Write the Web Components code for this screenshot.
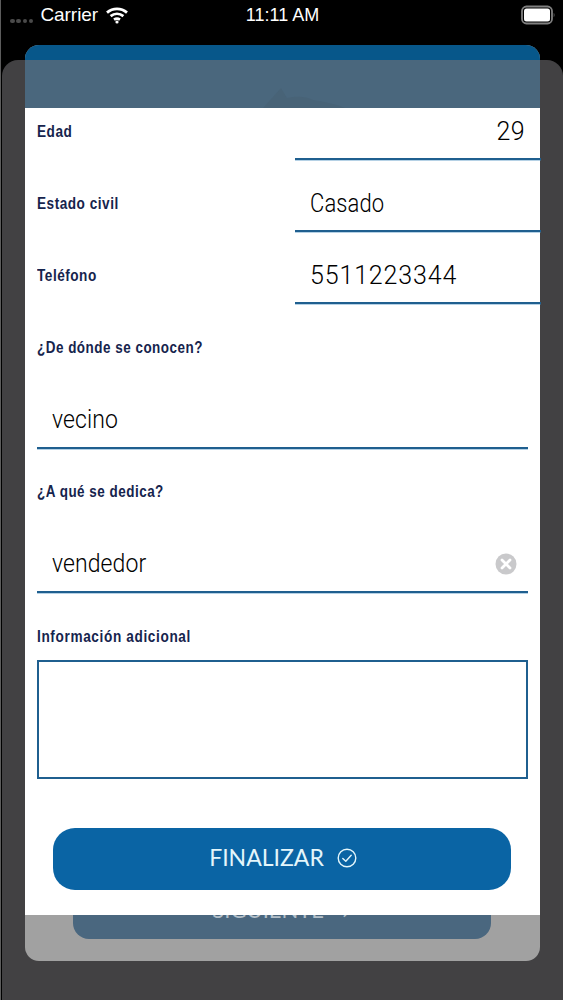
<!DOCTYPE html>
<html lang="es">
<head>
<meta charset="utf-8">
<title>Formulario</title>
<style>
  html, body { margin:0; padding:0; background:#000; }
</style>
</head>
<body>

<template id="tpl-status">
  <style>
    :host { display:flex; align-items:center; height:30px; color:#fff; font:400 18px/30px "Liberation Sans", Arial, sans-serif; position:relative; z-index:3; }
    .left { flex:1; display:flex; align-items:center; padding-left:10px; }
    .dots { display:flex; gap:1.8px; margin-right:7px; margin-top:12px; }
    .dots i { width:4.5px; height:4.5px; border-radius:50%; background:#4a4a4a; }
    .carrier { font-size:19px; letter-spacing:-.05px; }
    .wifi { margin-left:8px; }
    .time { flex:1; text-align:center; font-size:18px; }
    .right { flex:1; display:flex; justify-content:flex-end; padding-right:8px; }
  </style>
  <div class="left">
    <span class="dots"><i></i><i></i><i></i><i></i></span>
    <span class="carrier">Carrier</span>
    <svg class="wifi" width="22" height="17" viewBox="0 0 22 17" fill="none" stroke="#fff" stroke-width="2.8">
      <path d="M1 5.6C6.8 .6 15.2 .6 21 5.6"/>
      <path d="M4.6 9.2c3.8-3 9-3 12.8 0"/>
      <path d="M8 12.6c1.9-1.3 4.1-1.3 6 0"/>
      <circle cx="11" cy="15" r="1.6" fill="#fff" stroke="none"/>
    </svg>
  </div>
  <div class="time">11:11 AM</div>
  <div class="right">
    <svg width="34" height="20" viewBox="0 0 34 20">
      <rect x="1" y="1.5" width="30" height="17" rx="4.5" fill="none" stroke="#808080" stroke-width="1.8"/>
      <rect x="3" y="3.5" width="26" height="13" rx="2.5" fill="#fff"/>
      <path d="M32.6 8c.7.3 1 1.100 1 2s-.3 1.700-1 2z" fill="#555"/>
    </svg>
  </div>
</template>

<template id="tpl-inline">
  <style>
    :host { display:flex; height:52px; margin:0 -1px 20px 12px; }
    .label { width:258px; flex:none; font:700 16px/47px "Liberation Sans", sans-serif; color:#16244d; letter-spacing:.6px; transform:scaleX(.85); transform-origin:left center; }
    .field { flex:1; height:50px; border-bottom:2px solid #1f5f8f; box-shadow:0 1px 0 rgba(70,140,190,.4); font:300 25px/47px Roboto, sans-serif; color:#000; padding:0 15px; }
    .val { display:inline-block; letter-spacing:var(--ls,.1px); transform:scaleX(var(--sx,.88)); transform-origin:left center; }
    :host([end]) .field { text-align:right; padding-right:16px; }
    :host([end]) .val { transform-origin:right center; }
  </style>
  <div class="label"><slot name="label"></slot></div>
  <div class="field"><span class="val"><slot></slot></span></div>
</template>

<template id="tpl-stack">
  <style>
    :host { display:block; margin:0 12px 19px; }
    .label { height:46px; font:700 16px/47px "Liberation Sans", sans-serif; color:#16244d; letter-spacing:.6px; transform:scaleX(.84); transform-origin:left center; }
    .field { display:flex; align-items:center; justify-content:space-between; height:52px; margin-top:24px; padding:0 11px 1px 15px; border-bottom:2px solid #1f5f8f; box-shadow:0 1px 0 rgba(70,140,190,.4); font:300 25px/46px Roboto, sans-serif; color:#000; }
    .val { display:inline-block; letter-spacing:.1px; transform:scaleX(.92); transform-origin:left center; }
    .clear { display:none; }
    :host([clear]) .clear { display:block; }
  </style>
  <div class="label"><slot name="label"></slot></div>
  <div class="field">
    <span class="val"><slot></slot></span>
    <svg class="clear" width="22" height="22" viewBox="0 0 22 22">
      <circle cx="11" cy="11" r="10.5" fill="#c9c9cb"/>
      <path d="M7 7l8 8M15 7l-8 8" stroke="#fff" stroke-width="2.8" stroke-linecap="round"/>
    </svg>
  </div>
</template>

<template id="tpl-area">
  <style>
    :host { display:block; margin:0 12px; padding-top:2px; }
    .label { font:700 16px/46px "Liberation Sans", sans-serif; color:#16244d; letter-spacing:.75px; height:46px; transform:scaleX(.85); transform-origin:left center; }
    .box { height:115px; border:2px solid #1f5f8f; }
  </style>
  <div class="label"><slot></slot></div>
  <div class="box"></div>
</template>

<template id="tpl-button">
  <style>
    :host { display:flex; align-items:center; justify-content:center; gap:13px; box-sizing:border-box; height:62px; padding-bottom:3px; margin:49px 29px 0 28px; border-radius:22px; background:#0a64a4; color:#e4f6fb; font:400 23px/1 Lato, sans-serif; }
    span { margin-left:2px; }
  </style>
  <span><slot></slot></span>
  <svg width="20" height="20" viewBox="0 0 20 20" fill="none" stroke="#e4f6fb" stroke-width="1.4">
    <circle cx="10" cy="10" r="8.8"/>
    <path d="M5.8 10.4l3 2.9 5.4-6" stroke-linecap="round" stroke-linejoin="round"/>
  </svg>
</template>

<template id="tpl-screen">
  <style>
    :host { display:block; position:relative; width:563px; height:1000px; background:#000; overflow:hidden; }
    .dim { position:absolute; top:60px; left:2px; right:0; bottom:0; background:#424143; border-radius:16px 16px 0 0; }
    .edge { position:absolute; top:0; left:0; bottom:0; width:1px; background:#5c5c5c; }
    .back { position:absolute; top:45px; left:25px; width:515px; height:916px; border-radius:14px; background:#a1a1a1; overflow:hidden; }
    .back .head { height:63px; background:linear-gradient(#07578a 0 15px, #4a677d 15px); }
    .back svg { position:absolute; left:210px; top:43px; }
    .back .btn { position:absolute; left:48px; width:418px; top:820px; height:74px; border-radius:16px; background:#4a677f; color:#b4c0c9; text-align:center; font:400 22px/90px Lato, sans-serif; }
    .sheet { position:absolute; top:108px; left:25px; width:515px; height:807px; background:#fff; }
  </style>
  <div class="dim"></div>
  <div class="edge"></div>
  <div class="back">
    <div class="head"></div>
    <svg width="120" height="20" viewBox="0 0 120 20"><path d="M28 20L46 0l6 10c10-2 18-2 26 2 12 2 22 4 32 8z" fill="#486377"/></svg>
    <div class="btn">SIGUIENTE →</div>
  </div>
  <slot name="status"></slot>
  <div class="sheet"><slot></slot></div>
</template>

<x-screen>
  <x-status slot="status"></x-status>
  <x-inline end style="--sx:1;--ls:.4px"><span slot="label">Edad</span>29</x-inline>
  <x-inline><span slot="label">Estado civil</span>Casado</x-inline>
  <x-inline style="--sx:1;--ls:.85px"><span slot="label">Teléfono</span>5511223344</x-inline>
  <x-stack><span slot="label">¿De dónde se conocen?</span>vecino</x-stack>
  <x-stack clear><span slot="label">¿A qué se dedica?</span>vendedor</x-stack>
  <x-area>Información adicional</x-area>
  <x-button>FINALIZAR</x-button>
</x-screen>

<script>
  // each tag just stamps its template into an open shadow root
  function register(tag, tplId) {
    customElements.define(tag, class extends HTMLElement {
      constructor() {
        super();
        this.attachShadow({ mode: "open" });
        this.shadowRoot.appendChild(document.getElementById(tplId).content.cloneNode(true));
      }
    });
  }
  register("x-status", "tpl-status");
  register("x-inline", "tpl-inline");
  register("x-stack", "tpl-stack");
  register("x-area", "tpl-area");
  register("x-button", "tpl-button");
  register("x-screen", "tpl-screen");
</script>
</body>
</html>
